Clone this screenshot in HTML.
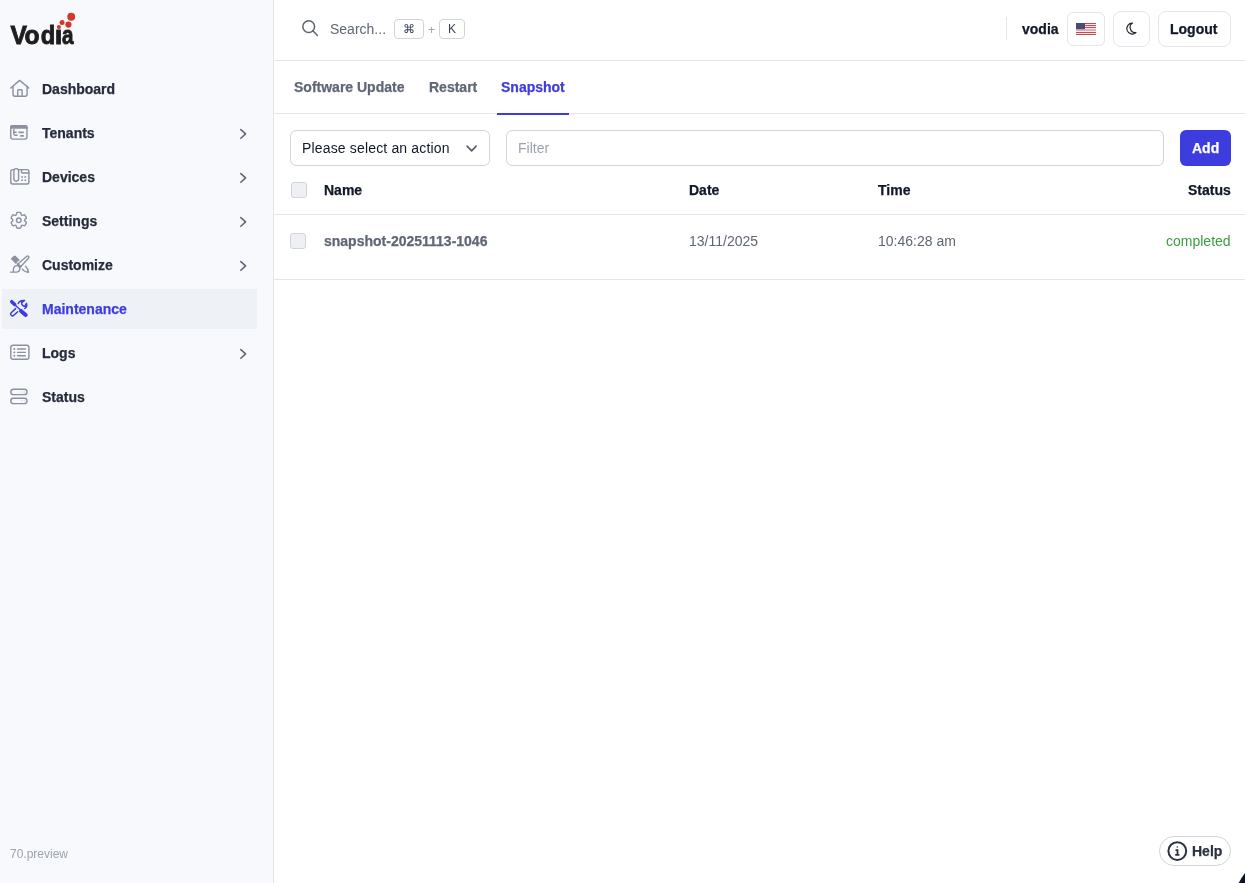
<!DOCTYPE html>
<html><head><meta charset="utf-8">
<style>
*{margin:0;padding:0;box-sizing:border-box}
.t{will-change:transform}
html,body{width:1245px;height:883px;overflow:hidden;background:#fff;font-family:"Liberation Sans",sans-serif;font-size:14px}
.a{position:absolute;white-space:nowrap}
.t{position:absolute;white-space:nowrap;line-height:14px}
#side{position:absolute;left:0;top:0;width:273px;height:883px;background:#f8f9fc;border-right:1px solid #e3e5eb;width:274px}
.nav{position:absolute;left:42px;font-weight:bold;color:#252b3b}
.chev{position:absolute;left:236px}
.box{position:absolute;border:1px solid #d9dce3;border-radius:6px;background:#fff}
.b,.nav{-webkit-text-stroke:.25px currentColor}
.b{font-weight:bold}
</style></head><body>
<div id="side">
  <svg class="a" style="left:0;top:0;will-change:transform" width="100" height="60" viewBox="0 0 100 60">
    <g font-family="Liberation Sans" font-weight="bold" font-size="25.8" fill="#1f1d1e" stroke="#1f1d1e" stroke-width="0.9">
    <text transform="translate(10.45 0) scale(0.952 1)" y="44.2">V</text>
    <text transform="translate(24.62 0) scale(0.956 1)" y="44.2">o</text>
    <text transform="translate(40.74 0) scale(0.921 1)" y="44.2">d</text>
    <text transform="translate(54.71 0) scale(1.059 1)" y="44.2">&#x131;</text>
    <text transform="translate(62.00 0) scale(0.800 1)" y="44.2">a</text>
    </g>
    <circle cx="71.2" cy="16.8" r="3.95" fill="#d0382b"/>
    <circle cx="68.4" cy="24.6" r="3.1" fill="#d0382b"/>
    <circle cx="62.1" cy="22.5" r="2.5" fill="#d0382b"/>
    <circle cx="58.9" cy="27.1" r="2.05" fill="#d0382b"/>
  </svg>
  <div class="a" style="left:2px;top:289px;width:255px;height:40px;background:#eef1f6"></div>
  <div class="t nav" style="top:82px">Dashboard</div>
  <div class="t nav" style="top:126px">Tenants</div>
  <div class="t nav" style="top:170px">Devices</div>
  <div class="t nav" style="top:214px">Settings</div>
  <div class="t nav" style="top:258px">Customize</div>
  <div class="t nav" style="top:302px;color:#3c3ce0">Maintenance</div>
  <div class="t nav" style="top:346px">Logs</div>
  <div class="t nav" style="top:390px">Status</div>
  <div class="t" style="left:10px;top:847px;font-size:12px;color:#9ca3af">70.preview</div>
  <svg class="a" style="left:0;top:0" width="274" height="420" fill="none" stroke="#8b91a0" stroke-width="1.4" stroke-linecap="round" stroke-linejoin="round">
    <!-- chevrons -->
    <g stroke="#5d6474" stroke-width="1.5">
      <path d="M240.8 129.6 L245.6 133.9 L240.8 138.2"/>
      <path d="M240.8 173.6 L245.6 177.9 L240.8 182.2"/>
      <path d="M240.8 217.6 L245.6 221.9 L240.8 226.2"/>
      <path d="M240.8 261.6 L245.6 265.9 L240.8 270.2"/>
      <path d="M240.8 349.6 L245.6 353.9 L240.8 358.2"/>
    </g>
    <!-- house -->
    <path d="M10.8 88 L19.6 80.4 L28.8 88"/>
    <path d="M13 86.2 V94.2 a2 2 0 0 0 2 2 H25.1 a2 2 0 0 0 2 -2 V86.2"/>
    <path d="M17.7 96 V90.6 a.8 .8 0 0 1 .8 -.8 H21.3 a.8 .8 0 0 1 .8 .8 V96"/>
    <!-- tenants -->
    <rect x="10.75" y="125.7" width="16.2" height="13.4" rx="2"/>
    <path d="M10.1 128.8 V127.1 a2.1 2.1 0 0 1 2.1 -2.1 H25.5 a2.1 2.1 0 0 1 2.1 2.1 V128.8 Z" fill="#8b91a0" stroke="none"/>
    <path d="M13.8 129 V133.6 a1.6 1.6 0 0 0 1.6 1.6 H17.6 M13.8 132.3 H16.6" stroke-linecap="butt"/>
    <path d="M18.4 132.3 H23.8 M20.2 135.9 H23.8" stroke-width="1.8" stroke-linecap="butt"/>
    <!-- devices -->
    <path d="M13.6 169.6 H12.6 a1.8 1.8 0 0 0 -1.8 1.8 V182.2 a1.8 1.8 0 0 0 1.8 1.8 H27.1 a1.8 1.8 0 0 0 1.8 -1.8 V171.4 a1.8 1.8 0 0 0 -1.8 -1.8 H18.9"/>
    <rect x="13.9" y="168.6" width="4.7" height="12.6" rx="2.35"/>
    <path d="M21.5 169.6 V172 a1 1 0 0 0 1 1 H28.9"/>
    <g fill="#8b91a0" stroke="none">
      <rect x="21.3" y="176.2" width="1.6" height="1.6"/><rect x="24.5" y="176.2" width="1.6" height="1.6"/>
      <rect x="21.3" y="179.4" width="1.6" height="1.6"/><rect x="24.5" y="179.4" width="1.6" height="1.6"/>
    </g>
    <!-- settings -->
    <g transform="translate(8.2,209.75) scale(0.88)">
      <path d="M9.594 3.94c.09-.542.56-.94 1.11-.94h2.593c.55 0 1.02.398 1.11.94l.213 1.281c.063.374.313.686.645.87.074.04.147.083.22.127.325.196.72.257 1.075.124l1.217-.456a1.125 1.125 0 011.37.49l1.296 2.247a1.125 1.125 0 01-.26 1.431l-1.003.827c-.293.241-.438.613-.43.992a7.723 7.723 0 010 .255c-.008.378.137.75.43.991l1.004.827c.424.35.534.955.26 1.43l-1.298 2.247a1.125 1.125 0 01-1.369.491l-1.217-.456c-.355-.133-.75-.072-1.076.124a6.47 6.47 0 01-.22.128c-.331.183-.581.495-.644.869l-.213 1.281c-.09.543-.56.94-1.11.94h-2.594c-.55 0-1.019-.398-1.11-.94l-.213-1.281c-.062-.374-.312-.686-.644-.87a6.52 6.52 0 01-.22-.127c-.325-.196-.72-.257-1.076-.124l-1.217.456a1.125 1.125 0 01-1.369-.49l-1.297-2.247a1.125 1.125 0 01.26-1.431l1.004-.827c.292-.24.437-.613.43-.991a6.932 6.932 0 010-.255c.007-.38-.138-.751-.43-.992l-1.004-.827a1.125 1.125 0 01-.26-1.43l1.297-2.247a1.125 1.125 0 011.37-.491l1.216.456c.356.133.751.072 1.076-.124.072-.044.146-.086.22-.128.332-.183.582-.495.644-.869l.214-1.28z" stroke-width="1.6"/>
      <circle cx="12" cy="12" r="2.6" stroke-width="1.6"/>
    </g>
    <!-- customize -->
    <path d="M11.5 258.9 L13.9 256.5 a1.1 1.1 0 0 1 1.5 0 L18.9 260 L17.4 261 L16.4 262.3 L16 263.3 Z" fill="#8b91a0" stroke-width="1.1"/>
    <path d="M17.6 264.3 L26.5 256.4 a1.35 1.35 0 0 1 2 1.9 L21 266.2"/>
    <path d="M17.9 264.4 L20.4 266.9" stroke-width="2.2"/>
    <path d="M10.5 272.1 H16.1 C18.2 272.1 19.8 270.5 19.8 268.5 C19.8 266.9 18.7 265.6 17 265.6 C14.8 265.6 13.4 267.2 13.4 269.3 V272"/>
    <path d="M22.3 269 C23.5 270.9 25.6 272.1 28.4 272.4 C28.1 270 27.3 267.8 25.6 266.2"/>
    <!-- maintenance -->
    <g stroke="#3c3ce0">
      <path d="M11.7 301.7 L14.7 304.6" stroke-width="3.5"/>
      <path d="M14.6 304.5 L20.2 309.8" stroke-width="1.4"/>
      <path d="M21 310.9 L25.7 314.9" stroke-width="4"/>
      <path d="M15.6 308.6 L11.2 312.7 a1.8 1.8 0 0 0 2.6 2.6 L17.7 311.7" stroke-width="1.5"/>
      <path d="M18.2 303.6 C18.6 301.6 20.6 300.2 24.6 300.4 L21.6 302.6 C21.4 304.6 23 306.2 25 306.2 L26.5 303.4 C27.2 305.6 26.4 307.4 24.8 308.4" stroke-width="1.5"/>
    </g>
    <!-- logs -->
    <rect x="10.8" y="345.3" width="18.1" height="13.9" rx="2.2"/>
    <path d="M14.3 349 h.05 M14.3 352.4 h.05 M14.3 355.7 h.05" stroke-width="1.9"/>
    <path d="M17.6 349 H25.3 M17.6 352.4 H25.3 M17.6 355.7 H25.3"/>
    <!-- status -->
    <rect x="10.8" y="389.2" width="16.2" height="5.4" rx="2.7"/>
    <rect x="10.8" y="398.2" width="16.2" height="5.4" rx="2.7"/>
    <g fill="#b9bdc7" stroke="none"><circle cx="21.8" cy="392" r=".55"/><circle cx="24.3" cy="392" r=".6"/><circle cx="21.8" cy="400.8" r=".55"/><circle cx="24.3" cy="400.8" r=".6"/></g>
  </svg>
</div>

<!-- header -->
<div class="a" style="left:274px;top:60px;width:971px;height:1px;background:#e3e5eb"></div>
<svg class="a" style="left:300px;top:18px" width="22" height="22" fill="none" stroke="#5b6272" stroke-width="1.5" stroke-linecap="round">
  <circle cx="8.7" cy="8.6" r="5.9"/><path d="M12.9 12.8 L17.4 17.4"/>
</svg>
<div class="t" style="left:330px;top:22px;color:#5f6675">Search...</div>
<div class="box" style="left:394px;top:19px;width:30px;height:20px;border-radius:4px;border-color:#cfd3da"></div>
<div class="t" style="left:402.6px;top:22px;font-size:12px;color:#374151">&#x2318;</div>
<div class="t" style="left:427.5px;top:22.6px;font-size:12px;color:#9ca3af">+</div>
<div class="box" style="left:439px;top:19px;width:26px;height:20px;border-radius:4px;border-color:#cfd3da"></div>
<div class="t" style="left:448px;top:22px;font-size:12px;color:#374151">K</div>

<div class="a" style="left:1006px;top:17px;width:1px;height:23px;background:#e5e7eb"></div>
<div class="t b" style="left:1022px;top:22px;color:#111827">vodia</div>
<div class="box" style="left:1067px;top:12px;width:38px;height:34px;border-color:#e3e5eb"></div>
<svg class="a" style="left:1076px;top:23px" width="20" height="12">
  <rect width="20" height="12" fill="#f7eced"/>
  <g fill="#c9474f"><rect y="0" width="20" height="1"/><rect y="2" width="20" height="1"/><rect y="4" width="20" height="1"/><rect y="6" width="20" height="2" fill="#e4adb0"/><rect y="9" width="20" height="1"/><rect y="11" width="20" height="1"/></g>
  <rect width="9" height="6" fill="#474b77"/><rect y="6" width="9" height=".4" fill="#8a8cac"/>
</svg>
<div class="box" style="left:1113px;top:11px;width:37px;height:36px;border-radius:8px;border-color:#e3e5eb"></div>
<svg class="a" style="left:1124px;top:21px" width="14" height="15" fill="none" stroke="#1f2430" stroke-width="1.15">
  <path d="M8.6 2.1 A5.48 5.48 0 1 0 12 11.6 A5.16 5.16 0 0 1 8.6 2.1 Z" stroke-linejoin="round"/>
</svg>
<div class="box" style="left:1158px;top:11px;width:73px;height:36px;border-radius:8px;border-color:#e3e5eb"></div>
<div class="t b" style="left:1170.3px;top:22px;color:#111827">Logout</div>

<!-- tabs -->
<div class="a" style="left:274px;top:113px;width:971px;height:1px;background:#e3e5eb"></div>
<div class="t b" style="left:294px;top:80px;color:#5f6675">Software Update</div>
<div class="t b" style="left:429px;top:80px;color:#5f6675">Restart</div>
<div class="t b" style="left:501px;top:80px;color:#3c3ce0">Snapshot</div>
<div class="a" style="left:497px;top:113px;width:72px;height:2px;background:#3c3ce0"></div>

<!-- toolbar -->
<div class="box" style="left:290px;top:130px;width:200px;height:36px;border-color:#d1d5db"></div>
<div class="t" style="left:302px;top:141px;color:#111827;letter-spacing:.16px">Please select an action</div>
<svg class="a" style="left:464px;top:143px" width="16" height="12" fill="none" stroke="#555b6c" stroke-width="1.55" stroke-linecap="round" stroke-linejoin="round"><path d="M3.1 3.1 L7.6 7.9 L12.1 3.1"/></svg>
<div class="box" style="left:506px;top:130px;width:658px;height:36px;border-color:#d1d5db"></div>
<div class="t" style="left:518px;top:141px;color:#9ca3af">Filter</div>
<div class="a" style="left:1180px;top:130px;width:51px;height:36px;border-radius:6px;background:#3d3ddf"></div>
<div class="t b" style="left:1192px;top:141px;color:#fff">Add</div>

<!-- table -->
<div class="a" style="left:291px;top:182px;width:16px;height:16px;border:1px solid #d1d5db;border-radius:3px;background:#eef0f4"></div>
<div class="t b" style="left:324px;top:183px;color:#111827">Name</div>
<div class="t b" style="left:689px;top:183px;color:#111827">Date</div>
<div class="t b" style="left:878px;top:183px;color:#111827">Time</div>
<div class="t b" style="left:1188px;top:183px;color:#111827">Status</div>
<div class="a" style="left:274px;top:214px;width:971px;height:1px;background:#e3e5eb"></div>
<div class="a" style="left:290px;top:233px;width:16px;height:16px;border:1px solid #d1d5db;border-radius:3px;background:#eef0f4"></div>
<div class="t b" style="left:324px;top:234px;color:#5f6675">snapshot-20251113-1046</div>
<div class="t" style="left:689px;top:234px;color:#5f6675">13/11/2025</div>
<div class="t" style="left:878px;top:234px;color:#5f6675">10:46:28 am</div>
<div class="t" style="left:1166px;top:234px;color:#3b9d3f">completed</div>
<div class="a" style="left:274px;top:279px;width:971px;height:1px;background:#e3e5eb"></div>

<!-- help -->
<div class="a" style="left:1159px;top:836px;width:72px;height:30px;border:1px solid #d1d5db;border-radius:15px;background:#fff"></div>
<svg class="a" style="left:1165px;top:839px" width="25" height="25" fill="none" stroke="#2a3142" stroke-width="2">
  <circle cx="12.3" cy="12.1" r="8.9"/>
  <path d="M10.5 11.1 H12.5 V15.4 M10.2 15.8 H14.4" stroke-width="1.8"/>
  <circle cx="12.3" cy="7.9" r="0.75" fill="#2a3142" stroke="none"/>
</svg>
<div class="t b" style="left:1192px;top:844px;color:#2a3142">Help</div>
<svg class="a" style="left:1230px;top:863px" width="15" height="20"><path d="M8.7 20 Q11.4 14.6 15 10 V20 Z" fill="#0f1424"/></svg>
</body></html>
